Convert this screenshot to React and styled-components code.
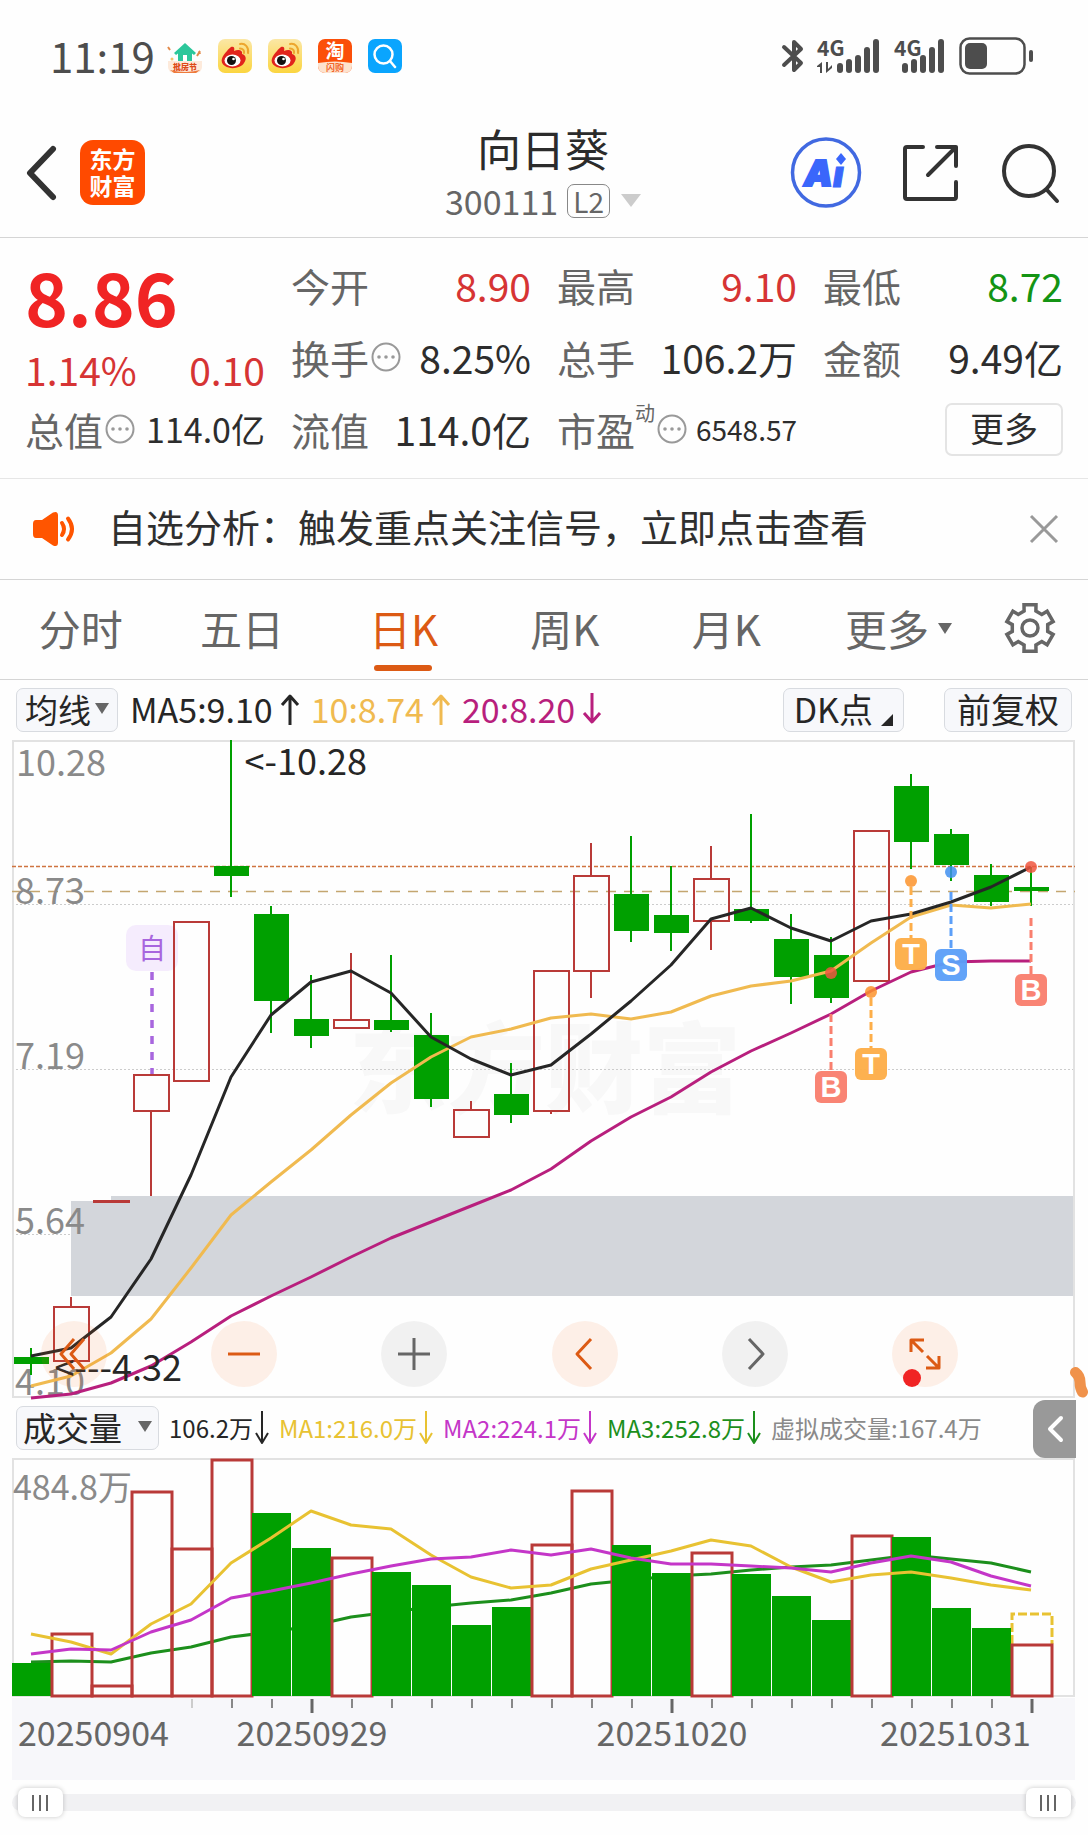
import React, { useState } from 'react';
import styled, { createGlobalStyle, css } from 'styled-components';

const GlobalStyle = createGlobalStyle`
  * { box-sizing: border-box; }
  body {
    margin: 0;
    background: #fefefe;
    color: #2b2b2b;
    font-family: "Noto Sans CJK SC", "Noto Sans", sans-serif;
  }
  button {
    font: inherit;
    color: inherit;
    border: 0;
    padding: 0;
    background: none;
    cursor: pointer;
  }
  svg { display: block; flex: none; overflow: visible; }
`;

/* ---------- data ---------- */

const STEP = 40;
const cx = (i) => 19 + i * STEP;

// [up, bodyTop, bodyBottom, wickTop, wickBottom]
const candles = [
  [0, 617, 624, 608, 635],
  [1, 567, 621, 557, 567],
  [1, 461, 462, 461, 462],
  [1, 335, 371, 335, 456],
  [1, 182, 341, 182, 341],
  [0, 126, 136, 0, 157],
  [0, 174, 261, 166, 293],
  [0, 279, 296, 235, 308],
  [1, 280, 288, 213, 280],
  [0, 280, 290, 215, 292],
  [0, 295, 359, 273, 367],
  [1, 370, 397, 361, 370],
  [0, 354, 375, 323, 383],
  [1, 231, 371, 231, 374],
  [1, 136, 231, 103, 258],
  [0, 154, 191, 96, 202],
  [0, 175, 193, 126, 211],
  [1, 139, 181, 106, 210],
  [0, 169, 181, 74, 183],
  [0, 199, 237, 174, 264],
  [0, 215, 258, 197, 263],
  [1, 91, 241, 91, 241],
  [0, 46, 102, 34, 129],
  [0, 94, 125, 89, 141],
  [0, 135, 162, 124, 166],
  [0, 147, 151, 127, 166],
];

const priceLines = [
  { color: '#b81f7d', ys: [658, 654, 643, 626, 602, 576, 556, 537, 517, 498, 482, 466, 450, 429, 401, 377, 357, 332, 311, 293, 274, 251, 232, 222, 221, 221] },
  { color: '#f0ba50', ys: [646, 636, 613, 579, 528, 475, 442, 410, 375, 343, 317, 297, 289, 278, 274, 279, 272, 256, 246, 241, 231, 203, 177, 165, 168, 164] },
  { color: '#262626', ys: [616, 608, 577, 519, 435, 337, 275, 242, 231, 253, 297, 319, 335, 325, 294, 261, 225, 179, 168, 188, 201, 181, 174, 162, 147, 127] },
];

// [up, top]
const volumes = [
  [0, 204], [1, 175], [1, 227], [1, 33], [1, 90], [1, 1], [0, 54], [0, 89], [1, 99],
  [0, 113], [0, 126], [0, 166], [0, 148], [1, 86], [1, 32], [0, 86], [0, 114], [1, 94],
  [0, 115], [0, 137], [0, 161], [1, 77], [0, 78], [0, 149], [0, 169], [1, 186],
];

const slowVolume = { color: '#1c8f1c', ys: [204, 203, 204, 195, 189, 179, 174, 168, 159, 154, 149, 145, 142, 135, 126, 122, 118, 116, 112, 109, 107, 102, 97, 101, 105, 114] };
const volumeLines = [
  { color: '#e8c232', ys: [176, 184, 196, 166, 146, 105, 80, 53, 67, 71, 97, 119, 130, 127, 111, 102, 93, 82, 88, 109, 124, 117, 114, 120, 127, 132] },
  { color: '#c436c8', ys: [196, 191, 192, 174, 162, 140, 133, 125, 116, 108, 101, 99, 92, 97, 91, 100, 106, 106, 108, 110, 114, 105, 98, 104, 118, 128] },
];

const RED = '#b93a38';
const GREEN = '#00a000';

const signals = [
  { i: 20, letter: 'B', color: '#f97f6e', dot: 233, from: 274, badge: 331 },
  { i: 21, letter: 'T', color: '#fdae49', dot: 252, from: 258, badge: 308 },
  { i: 22, letter: 'T', color: '#fdae49', dot: 141, from: 147, badge: 198 },
  { i: 23, letter: 'S', color: '#5c9ff8', dot: 132, from: 152, badge: 209 },
  { i: 25, letter: 'B', color: '#f97f6e', dot: 127, from: 178, badge: 234 },
];
const dotColor = { B: '#f0563f', T: '#fb932b', S: '#3f8ff0' };

const toPoints = (ys) => ys.map((y, i) => `${cx(i)},${y}`).join(' ');

/* ---------- styled parts ---------- */

const Page = styled.main`
  width: 100%;
  min-width: 1000px;
  padding-bottom: 18px;
`;

const StatusBar = styled.div`
  display: flex;
  align-items: center;
  height: 112px;
  padding: 0 54px 0 50px;
  color: #4d4d4d;
`;
const Clock = styled.time`
  width: 118px;
  padding-bottom: 2px;
  font-size: 42px;
  line-height: 48px;
`;
const AppIcons = styled.div`
  display: flex;
  gap: 16px;
`;
const Signals = styled.div`
  display: flex;
  align-items: center;
  gap: 13px;
  margin-left: auto;
`;

const Header = styled.header`
  display: grid;
  grid-template-columns: 1fr auto 1fr;
  align-items: center;
  height: 126px;
  padding: 0 28px 4px 26px;
  border-bottom: 1px solid #d5d5d5;
`;
const HeaderSide = styled.div`
  display: flex;
  align-items: center;
  gap: ${(p) => p.$gap}px;
  justify-content: ${(p) => (p.$end ? 'flex-end' : 'flex-start')};
`;
const Logo = styled.a`
  width: 65px;
  height: 65px;
  padding-top: 5px;
  border-radius: 13px;
  background: #ff4a00;
  color: #fff;
  font-size: 23px;
  font-weight: 700;
  line-height: 27px;
  text-align: center;
  text-decoration: none;
`;
const Stock = styled.div`
  text-align: center;
`;
const StockName = styled.h1`
  margin: 0;
  font-size: 44px;
  font-weight: 400;
  line-height: 56px;
`;
const StockCode = styled.button`
  display: flex;
  align-items: center;
  color: #666;
  font-size: 34px;
  line-height: 50px;
`;
const Level = styled.span`
  margin: 0 11px 0 9px;
  padding: 0 5px;
  border: 1px solid #888;
  border-radius: 7px;
  font-size: 28px;
  line-height: 32px;
`;
const Caret = styled.i`
  width: 0;
  height: 0;
  border: ${(p) => p.$size}px solid transparent;
  border-top: ${(p) => p.$drop}px solid ${(p) => p.$color || '#666'};
  border-bottom: 0;
`;

const Quote = styled.section`
  display: grid;
  grid-template-columns: repeat(4, 1fr);
  grid-auto-rows: 72px;
  column-gap: 26px;
  padding: 11px 25px 13px;
  border-bottom: 1px solid #e6e6e6;
`;
const PriceBlock = styled.div`
  grid-row: span 2;
  color: #f02424;
`;
const Price = styled.div`
  font-size: 73px;
  font-weight: 700;
  line-height: 92px;
`;
const Change = styled.div`
  display: flex;
  justify-content: space-between;
  color: #d63434;
  font-size: 39px;
  line-height: 56px;
`;
const Cell = styled.div`
  display: flex;
  align-items: center;
  color: #666;
  font-size: 39px;
  line-height: 72px;
  white-space: nowrap;
  svg { margin-left: 2px; }
`;
const Value = styled.span`
  margin-left: auto;
  color: ${(p) => p.$color || '#2d2d2d'};
  font-size: ${(p) => p.$size || 39}px;
`;
const Sup = styled.sup`
  align-self: flex-start;
  font-size: 20px;
  line-height: 40px;
`;
const MoreButton = styled.button`
  width: 118px;
  height: 53px;
  margin-left: auto;
  padding-bottom: 2px;
  border: 2px solid #e4e4e4;
  border-radius: 7px;
  color: #2d2d2d;
  font-size: 34px;
  line-height: 44px;
`;

const Notice = styled.section`
  display: flex;
  align-items: center;
  height: 101px;
  padding: 0 30px 0 32px;
  border-bottom: 1px solid #d5d5d5;
`;
const NoticeText = styled.a`
  flex: 1;
  margin-left: 32px;
  padding-bottom: 7px;
  color: #2f2f2f;
  font-size: 38px;
  line-height: 54px;
  text-decoration: none;
`;

const Tabs = styled.nav`
  display: flex;
  height: 100px;
  padding-right: 18px;
  border-bottom: 1px solid #d5d5d5;
`;
const Tab = styled.button`
  display: flex;
  flex: ${(p) => p.$grow || 162} 1 0;
  align-items: center;
  justify-content: center;
  gap: 9px;
  position: relative;
  padding-bottom: 3px;
  color: #666;
  font-size: 42px;
  line-height: 60px;
  ${(p) =>
    p.$active &&
    css`
      color: #dc5a14;
      &::after {
        content: '';
        position: absolute;
        bottom: 8px;
        width: 58px;
        height: 6px;
        border-radius: 3px;
        background: #dc5a14;
      }
    `}
`;

const Toolbar = styled.div`
  display: flex;
  align-items: center;
  gap: ${(p) => p.$gap}px;
  position: relative;
  height: 60px;
  padding: 0 16px;
  white-space: nowrap;
`;
const Chip = styled.button`
  display: flex;
  align-items: center;
  justify-content: center;
  gap: ${(p) => p.$gap || 4}px;
  height: 44px;
  padding: 0 ${(p) => p.$pad || 8}px 3px;
  border: 1px solid #d8dbe0;
  border-radius: 7px;
  background: #f7f8fb;
  color: #262626;
  font-size: ${(p) => p.$size || 34}px;
  line-height: 38px;
`;
const Corner = styled.i`
  align-self: flex-end;
  width: 0;
  height: 0;
  margin: 0 0 2px 5px;
  border-bottom: 12px solid #262626;
  border-left: 12px solid transparent;
`;
const Average = styled.span`
  display: flex;
  align-items: center;
  gap: 8px;
  padding-bottom: 3px;
  color: ${(p) => p.$color};
  font-size: 34px;
  line-height: 44px;
`;
const VolumeItem = styled.span`
  display: flex;
  align-items: center;
  gap: 2px;
  color: ${(p) => p.$color};
  font-size: 24px;
  line-height: 44px;
`;
const ToolbarEnd = styled.div`
  display: flex;
  gap: 40px;
  margin-left: auto;
`;
const Collapse = styled.button`
  display: flex;
  align-items: center;
  justify-content: center;
  position: absolute;
  right: 12px;
  top: 2px;
  width: 43px;
  height: 58px;
  border-radius: 12px 0 0 12px;
  background: #999;
`;

const Plot = styled.section`
  position: relative;
  margin: 0 13px 0 12px;
`;
const Canvas = styled.svg`
  width: 100%;
  height: auto;
`;
const Controls = styled.div`
  display: flex;
  justify-content: space-between;
  position: absolute;
  left: 29px;
  right: 117px;
  bottom: 11px;
`;
const Round = styled.button`
  display: flex;
  align-items: center;
  justify-content: center;
  position: relative;
  width: 66px;
  height: 66px;
  border-radius: 50%;
  background: ${(p) => (p.$warm ? 'rgba(250, 110, 30, 0.1)' : 'rgba(0, 0, 0, 0.05)')};
  color: ${(p) => (p.$warm ? '#dc5a14' : '#666')};
`;
const RedDot = styled.i`
  position: absolute;
  left: 11px;
  bottom: 0;
  width: 18px;
  height: 18px;
  border-radius: 50%;
  background: #f02424;
`;
const Scribble = styled.svg`
  position: absolute;
  right: -13px;
  bottom: 0;
  overflow: hidden;
`;

const RangeBox = styled.div`
  position: relative;
  height: 29px;
  margin: 8px 12px 0;
  &::before {
    content: '';
    position: absolute;
    inset: 6px 0;
    border-radius: 9px;
    background: #f1f1f3;
  }
`;
const Range = styled.input`
  appearance: none;
  position: absolute;
  left: 6px;
  width: calc(100% - 11px);
  height: 29px;
  margin: 0;
  background: none;
  pointer-events: none;
  &::-webkit-slider-thumb {
    appearance: none;
    width: 45px;
    height: 29px;
    border-radius: 7px;
    background:
      linear-gradient(#666, #666) 14px 7px / 2px 16px no-repeat,
      linear-gradient(#666, #666) 21px 7px / 2px 16px no-repeat,
      linear-gradient(#666, #666) 28px 7px / 2px 16px no-repeat,
      #fff;
    box-shadow: 0 0 5px rgba(0, 0, 0, 0.22);
    pointer-events: auto;
  }
`;

/* ---------- icons ---------- */

const Stroke = ({ w, h, d, width = 3, color = 'currentColor', cap = 'butt' }) => (
  <svg width={w} height={h} viewBox={`0 0 ${w} ${h}`} fill="none" stroke={color} strokeWidth={width} strokeLinecap={cap} strokeLinejoin="round">
    <path d={d} />
  </svg>
);

const HouseIcon = () => (
  <svg width="34" height="34" viewBox="0 0 34 34">
    <path d="M0 22h34v6a6 6 0 0 1-6 6H6a6 6 0 0 1-6-6z" fill="#fdeadb" />
    <path d="M2 31q15 4 30 0l-4 3H6z" fill="#ee7a3c" />
    <path d="M17 4 6 14l2 2 2-1.500v7.500h14v-7.500l2 1.500 2-2z" fill="#2cc79b" />
    <path d="M15 16h4v6h-4z" fill="#fff" />
    <path d="M0 8l2 3M32 12l-3 5M31 12l1 3" stroke="#e38a4a" strokeWidth="2" />
    <circle cx="4" cy="20" r="1.500" fill="#f6c46c" />
    <text x="17" y="31" fontSize="8" fontWeight="900" fill="#dd4a17" textAnchor="middle">批房节</text>
  </svg>
);
const WeiboIcon = () => (
  <svg width="34" height="34" viewBox="0 0 34 34">
    <defs>
      <linearGradient id="wb" x1="0" y1="0" x2="0" y2="1">
        <stop offset="0" stopColor="#fbe7a5" />
        <stop offset="1" stopColor="#fbd540" />
      </linearGradient>
    </defs>
    <rect width="34" height="34" rx="7" fill="url(#wb)" />
    <path d="M13 8c3-1 4 1 3 4 4-2 9-1 8 3 4 1 5 5 2 9-3 5-13 7-19 3-6-4-3-10 2-15 1-2 3-3 4-4z" fill="#e1241c" />
    <ellipse cx="14.500" cy="21.500" rx="8" ry="6" fill="#fff" />
    <circle cx="13.500" cy="21.500" r="4.500" fill="#111" />
    <circle cx="15.500" cy="20" r="1.300" fill="#fff" />
    <path d="M22 5c5-1 9 3 8 9M22 9.500c3 0 4.500 2 4 4.500" fill="none" stroke="#eda62e" strokeWidth="2" strokeLinecap="round" />
  </svg>
);
const TaoIcon = () => (
  <svg width="34" height="34" viewBox="0 0 34 34">
    <rect width="34" height="34" rx="7" fill="#fb4f09" />
    <path d="M0 24q17-3 34 0v3a7 7 0 0 1-7 7H7a7 7 0 0 1-7-7z" fill="#fde3cf" />
    <text x="17" y="19" fontSize="19" fontWeight="700" fill="#fff" textAnchor="middle">淘</text>
    <text x="17" y="32" fontSize="9" fontWeight="700" fill="#f2682c" textAnchor="middle">闪购</text>
  </svg>
);
const FindIcon = () => (
  <svg width="34" height="34" viewBox="0 0 34 34" fill="none" stroke="#fff" strokeWidth="2.500" strokeLinecap="round">
    <rect width="34" height="34" rx="7" fill="#0aa5fe" stroke="none" />
    <circle cx="15.500" cy="15.500" r="9" />
    <path d="M22 22l5 6" />
  </svg>
);
const BluetoothIcon = () => (
  <Stroke w={22} h={36} width={4} cap="round" d="M2 9 19 25 12 32V4l7 7L2 27" />
);
const SignalIcon = ({ data }) => {
  const start = data ? 20 : 8;
  return (
    <svg width={data ? 64 : 52} height="36" viewBox={`0 0 ${data ? 64 : 52} 36`} fill="#4d4d4d">
      <text x="0" y="18" fontSize="21" fontWeight="700">4G</text>
      {data && <path d="M0 28l5-4v11H3v-6H0zM9 24h2v7l4-4v3l-6 5z" />}
      {[10, 14, 18, 26, 34].map((h, i) => (
        <rect key={h} x={start + i * 9} y={35 - h} width="6" height={h} rx="3" />
      ))}
    </svg>
  );
};
const BatteryIcon = () => (
  <svg width="75" height="38" viewBox="0 0 75 38">
    <rect x="1.500" y="1.500" width="64" height="35" rx="9" fill="none" stroke="#4d4d4d" strokeWidth="2.500" />
    <rect x="6" y="6" width="22" height="26" rx="5" fill="#4d4d4d" />
    <rect x="70" y="13" width="4" height="12" rx="2" fill="#4d4d4d" />
  </svg>
);
const AiIcon = () => (
  <svg width="70" height="71" viewBox="0 0 70 71">
    <circle cx="35" cy="35.500" r="33.500" fill="none" stroke="#4169e1" strokeWidth="3.500" />
    <g fill="#3a66fb" stroke="#3a66fb" fontFamily="Inter, sans-serif" fontStyle="italic" fontWeight="900" fontSize="36">
      <text x="13" y="49" strokeWidth="2">A</text>
      <text x="42" y="50" strokeWidth="1">ı</text>
    </g>
    <path d="M50 16l5 6-5 6-5-6z" fill="#3a66fb" />
  </svg>
);
const ShareIcon = () => (
  <Stroke w={57} h={58} width={4} color="#333" cap="round" d="M21 3H5a2 2 0 0 0-2 2v48a2 2 0 0 0 2 2h47a2 2 0 0 0 2-2V38M35 3h19v19M54 3 26 31" />
);
const SearchIcon = () => (
  <svg width="60" height="60" viewBox="0 0 60 60" fill="none" stroke="#333" strokeWidth="4" strokeLinecap="round">
    <circle cx="29" cy="28" r="25" />
    <path d="M47 47l10 11" />
  </svg>
);
const InfoIcon = () => (
  <svg width="30" height="30" viewBox="0 0 30 30" fill="#999">
    <circle cx="15" cy="15" r="13.500" fill="none" stroke="#999" strokeWidth="2" />
    <circle cx="8" cy="15" r="1.800" />
    <circle cx="15" cy="15" r="1.800" />
    <circle cx="22" cy="15" r="1.800" />
  </svg>
);
const SpeakerIcon = () => (
  <svg width="44" height="36" viewBox="0 0 44 36" fill="#ff5500">
    <path d="M4 9h6L21 1.500q5-2 5 3v27q0 5-5 3L10 27H4q-3 0-3-4V13q0-4 3-4z" />
    <path d="M30 12q4 6 0 12M36 7.500q8 10.500 0 21" fill="none" stroke="#ff5500" strokeWidth="4" strokeLinecap="round" />
  </svg>
);

const gearPoints = [0, 1, 2, 3, 4, 5]
  .flatMap((k) => [[-19, 18], [-14.5, 24], [14.5, 24], [19, 18]].map(([a, r]) => {
    const t = ((k * 60 - 90 + a) * Math.PI) / 180;
    return `${(26 + r * Math.cos(t)).toFixed(1)},${(26 + r * Math.sin(t)).toFixed(1)}`;
  }))
  .join(' ');
const GearIcon = () => (
  <svg width="52" height="52" viewBox="0 0 52 52" fill="none" stroke="#666" strokeWidth="3.500">
    <polygon points={gearPoints} />
    <circle cx="26" cy="26" r="8" />
  </svg>
);

const Arrow = ({ up }) => (
  <Stroke w={18} h={32} d={up ? 'M9 32V3M1 12l8-9 8 9' : 'M9 0v29M1 20l8 9 8-9'} />
);
const SmallArrow = () => <Stroke w={14} h={34} width={2} d="M7 0v32M1 22l6 10 6-10" />;

/* ---------- charts ---------- */

const Line = ({ color, ys }) => (
  <polyline points={toPoints(ys)} fill="none" stroke={color} strokeWidth="3" strokeLinejoin="round" />
);

const PriceChart = () => (
  <Canvas viewBox="0 0 1063 658" role="img" aria-label="日K">
    <text x="533" y="365" fontSize="98" fontWeight="900" fill="#f8f8f8" textAnchor="middle">东方财富</text>
    <g stroke="#ccc" strokeDasharray="2 2">
      <path d="M0 164.500H1063M0 329.500H1063M0 494.500H1063" />
    </g>
    <path d="M59 461h40v-5h964v100H59z" fill="#d3d6db" />
    <rect x="1" y="1" width="1061" height="656" fill="none" stroke="#e2e2e2" strokeWidth="2" />
    <path d="M0 126.500H1063" stroke="#cf7440" strokeWidth="1.500" strokeDasharray="4 2" />
    <path d="M0 151.500H1063" stroke="#c4a670" strokeWidth="1.500" strokeDasharray="10 8" />

    <g fontSize="36" fill="#8a8a8a">
      <text x="4" y="36">10.28</text>
      <text x="3" y="164">8.73</text>
      <text x="3" y="329">7.19</text>
      <text x="3" y="494">5.64</text>
      <text x="3" y="655">4.10</text>
    </g>

    <rect x="114" y="185" width="52" height="46" rx="10" fill="#f5ecfd" />
    <text x="140" y="219" fontSize="28" fill="#a866de" textAnchor="middle">自</text>
    <path d="M140 232V334" stroke="#a866de" strokeWidth="3.500" strokeDasharray="8 8" />

    {candles.map(([up, top, bottom, high, low], i) => {
      const color = up ? RED : GREEN;
      return (
        <g key={i} stroke={color} strokeWidth="2">
          {high < top && <path d={`M${cx(i)} ${high}V${top}`} />}
          {low > bottom && <path d={`M${cx(i)} ${bottom}V${low}`} />}
          {up ? (
            <rect x={cx(i) - 17} y={top} width="35" height={bottom - top} fill="none" />
          ) : (
            <rect x={cx(i) - 17} y={top} width="35" height={bottom - top} fill={GREEN} stroke="none" />
          )}
        </g>
      );
    })}

    {priceLines.map((line) => <Line key={line.color} {...line} />)}

    {signals.map((s) => (
      <g key={s.i}>
        <path d={`M${cx(s.i)} ${s.from}V${s.badge}`} stroke={s.color} strokeWidth="3" strokeDasharray="8 4" />
        <circle cx={cx(s.i)} cy={s.dot} r="6" fill={dotColor[s.letter]} opacity="0.85" />
        <rect x={cx(s.i) - 16} y={s.badge} width="32" height="32" rx="6" fill={s.color} opacity="0.96" />
        <text
          x={cx(s.i)}
          y={s.badge + 26}
          fontFamily="Liberation Sans, sans-serif"
          fontSize="29"
          fontWeight="700"
          fill="#fff"
          textAnchor="middle"
        >
          {s.letter}
        </text>
      </g>
    ))}

    <g fontSize="36" fill="#262626">
      <text x="355" y="35" textAnchor="end">&lt;-10.28</text>
      <text x="170" y="641" textAnchor="end">&lt;---4.32</text>
    </g>
  </Canvas>
);

const VolumeChart = () => (
  <Canvas viewBox="0 0 1063 239" role="img" aria-label="成交量">
    <rect x="1" y="1" width="1061" height="237" fill="none" stroke="#e2e2e2" strokeWidth="2" />
    <text x="1" y="42" fontSize="34" fill="#8a8a8a">484.8万</text>
    <path d="M1000 186V156h40v30" fill="none" stroke="#e8c232" strokeWidth="3" strokeDasharray="9 3" />
    <Line {...slowVolume} />
    {volumes.map(([up, top], i) => (
      up ? (
        <rect key={i} x={cx(i) - 19} y={top + 1} width="40" height={237 - top} fill="none" stroke={RED} strokeWidth="3" />
      ) : (
        <rect key={i} x={cx(i) - 19} y={top + 1} width="39" height={237 - top} fill={GREEN} />
      )
    ))}
    {volumeLines.map((line) => <Line key={line.color} {...line} />)}
  </Canvas>
);

const DateAxis = () => (
  <Canvas viewBox="0 0 1063 83">
    <rect y="1" width="1063" height="82" fill="#f7f7fa" />
    {candles.slice(4).map((_, k) => {
      const i = k + 4;
      const major = i === 7 || i === 16 || i === 25;
      return (
        <path
          key={i}
          d={`M${cx(i) + 1} 2v${major ? 14 : 9}`}
          stroke={i === 4 ? '#ccc' : major ? '#666' : '#888'}
          strokeWidth={major ? 3 : 2}
        />
      );
    })}
    <g fontSize="34" fill="#666">
      <text x="6" y="49">20250904</text>
      <text x="300" y="49" textAnchor="middle">20250929</text>
      <text x="660" y="49" textAnchor="middle">20251020</text>
      <text x="1019" y="49" textAnchor="end">20251031</text>
    </g>
  </Canvas>
);

const tabs = ['分时', '五日', '日K', '周K', '月K'];

const App = () => {
  const [tab, setTab] = useState('日K');
  const [from, setFrom] = useState(0);
  const [to, setTo] = useState(100);
  const [notice, setNotice] = useState(true);

  return (
    <Page>
      <GlobalStyle />
      <StatusBar>
        <Clock>11:19</Clock>
        <AppIcons>
          <HouseIcon />
          <WeiboIcon />
          <WeiboIcon />
          <TaoIcon />
          <FindIcon />
        </AppIcons>
        <Signals>
          <BluetoothIcon />
          <SignalIcon data />
          <SignalIcon />
          <BatteryIcon />
        </Signals>
      </StatusBar>

      <Header>
        <HeaderSide $gap={22}>
          <button aria-label="返回">
            <Stroke w={32} h={54} width={6} color="#333" cap="round" d="M27 3 4 27l23 24" />
          </button>
          <Logo href="#">东方<br />财富</Logo>
        </HeaderSide>
        <Stock>
          <StockName>向日葵</StockName>
          <StockCode>
            300111<Level>L2</Level><Caret $size={10} $drop={13} $color="#ccc" />
          </StockCode>
        </Stock>
        <HeaderSide $gap={41} $end>
          <button aria-label="Ai"><AiIcon /></button>
          <button aria-label="分享"><ShareIcon /></button>
          <button aria-label="搜索"><SearchIcon /></button>
        </HeaderSide>
      </Header>

      <Quote>
        <PriceBlock>
          <Price>8.86</Price>
          <Change><span>1.14%</span><span>0.10</span></Change>
        </PriceBlock>
        <Cell>今开<Value $color="#d63434">8.90</Value></Cell>
        <Cell>最高<Value $color="#d63434">9.10</Value></Cell>
        <Cell>最低<Value $color="#149414">8.72</Value></Cell>
        <Cell>换手<InfoIcon /><Value>8.25%</Value></Cell>
        <Cell>总手<Value>106.2万</Value></Cell>
        <Cell>金额<Value>9.49亿</Value></Cell>
        <Cell>总值<InfoIcon /><Value $size={34}>114.0亿</Value></Cell>
        <Cell>流值<Value>114.0亿</Value></Cell>
        <Cell>市盈<Sup>动</Sup><InfoIcon /><Value $size={28}>6548.57</Value></Cell>
        <Cell><MoreButton>更多</MoreButton></Cell>
      </Quote>

      {notice && (
        <Notice>
          <SpeakerIcon />
          <NoticeText href="#">自选分析：触发重点关注信号，立即点击查看</NoticeText>
          <button aria-label="关闭" onClick={() => setNotice(false)}>
            <Stroke w={28} h={28} color="#999" d="M1 1l26 26M27 1L1 27" />
          </button>
        </Notice>
      )}

      <Tabs>
        {tabs.map((name) => (
          <Tab key={name} $active={name === tab} onClick={() => setTab(name)}>{name}</Tab>
        ))}
        <Tab $grow={184}>更多<Caret $size={7} $drop={11} /></Tab>
        <Tab $grow={80} aria-label="设置"><GearIcon /></Tab>
      </Tabs>

      <Toolbar $gap={12}>
        <Chip $size={33}>均线<Caret $size={7} $drop={11} /></Chip>
        <Average $color="#262626">MA5:9.10<Arrow up /></Average>
        <Average $color="#f0ba50">10:8.74<Arrow up /></Average>
        <Average $color="#b81f7d">20:8.20<Arrow /></Average>
        <ToolbarEnd>
          <Chip $pad={10} $gap={3}>DK点<Corner /></Chip>
          <Chip $pad={12}>前复权</Chip>
        </ToolbarEnd>
      </Toolbar>

      <Plot>
        <PriceChart />
        <Controls>
          <Round $warm aria-label="最左"><Stroke w={28} h={32} d="M14 1 1 16l13 15M24 1 11 16l13 15" /></Round>
          <Round $warm aria-label="缩小"><Stroke w={32} h={32} d="M0 16h32" /></Round>
          <Round aria-label="放大"><Stroke w={32} h={32} d="M0 16h32M16 0v32" /></Round>
          <Round $warm aria-label="左移"><Stroke w={20} h={32} d="M16 1 2 16l14 15" /></Round>
          <Round aria-label="右移"><Stroke w={20} h={32} d="M4 1l14 15L4 31" /></Round>
          <Round $warm aria-label="全屏">
            <Stroke w={34} h={34} d="M3 15V3h13M3 3l12 12M31 19v12H18M31 31 19 19" />
            <RedDot />
          </Round>
        </Controls>
        <Scribble width="18" height="31" viewBox="0 0 18 31">
          <path d="M5.500 5.500Q10 9 10 15T12.500 25" fill="none" stroke="#f0924b" strokeWidth="11" strokeLinecap="round" />
        </Scribble>
      </Plot>

      <Toolbar $gap={10}>
        <Chip $pad={6} $gap={16} $size={33}>成交量<Caret $size={7} $drop={11} /></Chip>
        <VolumeItem $color="#262626">106.2万<SmallArrow /></VolumeItem>
        <VolumeItem $color="#e8c232">MA1:216.0万<SmallArrow /></VolumeItem>
        <VolumeItem $color="#c436c8">MA2:224.1万<SmallArrow /></VolumeItem>
        <VolumeItem $color="#1c8f1c">MA3:252.8万<SmallArrow /></VolumeItem>
        <VolumeItem $color="#8a8a8a">虚拟成交量:167.4万</VolumeItem>
        <Collapse aria-label="收起">
          <Stroke w={18} h={28} width={4} color="#fff" cap="round" d="M15 3 4 14l11 11" />
        </Collapse>
      </Toolbar>

      <Plot>
        <VolumeChart />
        <DateAxis />
      </Plot>

      <RangeBox>
        <Range type="range" aria-label="开始" value={from} onChange={(e) => setFrom(e.target.value)} />
        <Range type="range" aria-label="结束" value={to} onChange={(e) => setTo(e.target.value)} />
      </RangeBox>
    </Page>
  );
};

export default App;
